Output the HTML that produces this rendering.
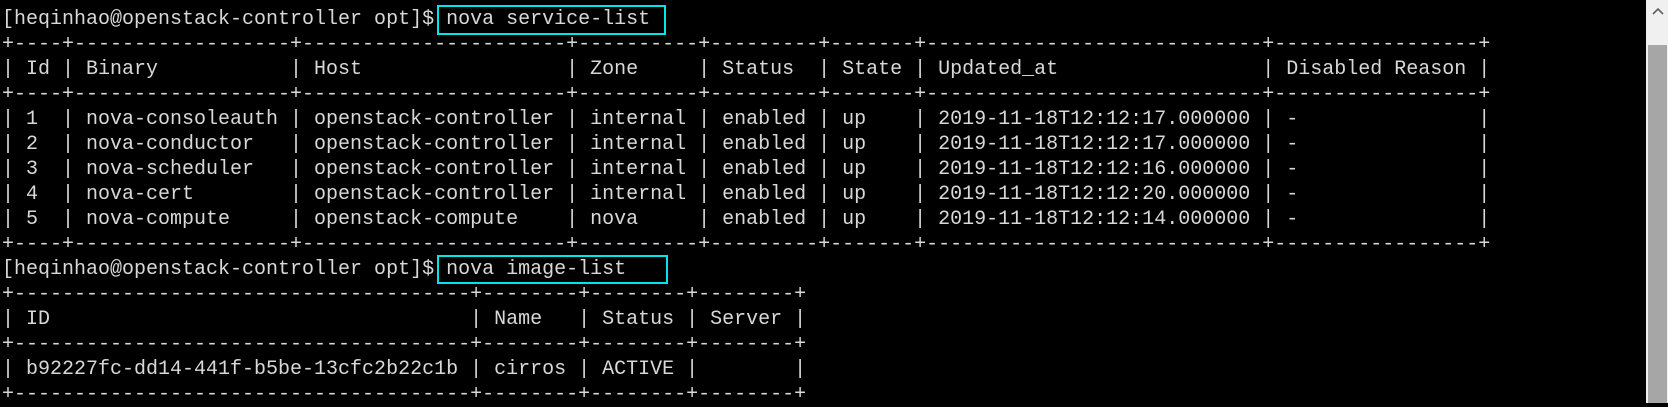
<!DOCTYPE html>
<html><head><meta charset="utf-8"><style>
html,body{margin:0;padding:0;background:#000;width:1668px;height:403px;overflow:hidden;}
pre{position:absolute;left:2px;top:7px;margin:0;font-family:"Liberation Mono",monospace;font-size:20px;line-height:25px;color:#d8d8d8;white-space:pre;}
.box{position:absolute;border:2px solid #00e5e5;box-sizing:border-box;}
.sb{position:absolute;left:1646px;top:0;width:22px;height:403px;background:#f0f0f0;}
.th{position:absolute;left:1648px;top:45px;width:19px;height:358px;background:#a6a6a6;}
</style></head><body>
<pre>[heqinhao@openstack-controller opt]$ nova service-list
+----+------------------+----------------------+----------+---------+-------+----------------------------+-----------------+
| Id | Binary           | Host                 | Zone     | Status  | State | Updated_at                 | Disabled Reason |
+----+------------------+----------------------+----------+---------+-------+----------------------------+-----------------+
| 1  | nova-consoleauth | openstack-controller | internal | enabled | up    | 2019-11-18T12:12:17.000000 | -               |
| 2  | nova-conductor   | openstack-controller | internal | enabled | up    | 2019-11-18T12:12:17.000000 | -               |
| 3  | nova-scheduler   | openstack-controller | internal | enabled | up    | 2019-11-18T12:12:16.000000 | -               |
| 4  | nova-cert        | openstack-controller | internal | enabled | up    | 2019-11-18T12:12:20.000000 | -               |
| 5  | nova-compute     | openstack-compute    | nova     | enabled | up    | 2019-11-18T12:12:14.000000 | -               |
+----+------------------+----------------------+----------+---------+-------+----------------------------+-----------------+
[heqinhao@openstack-controller opt]$ nova image-list
+--------------------------------------+--------+--------+--------+
| ID                                   | Name   | Status | Server |
+--------------------------------------+--------+--------+--------+
| b92227fc-dd14-441f-b5be-13cfc2b22c1b | cirros | ACTIVE |        |
+--------------------------------------+--------+--------+--------+</pre>
<div class="box" style="left:437px;top:5px;width:229px;height:30px;"></div>
<div class="box" style="left:437px;top:255px;width:231px;height:29px;"></div>
<div class="sb"></div>
<div class="th"></div>
<svg style="position:absolute;left:1651px;top:6px" width="14" height="10"><path d="M2 8 L7 3 L12 8" stroke="#606060" stroke-width="1.6" fill="none"/></svg>
</body></html>
